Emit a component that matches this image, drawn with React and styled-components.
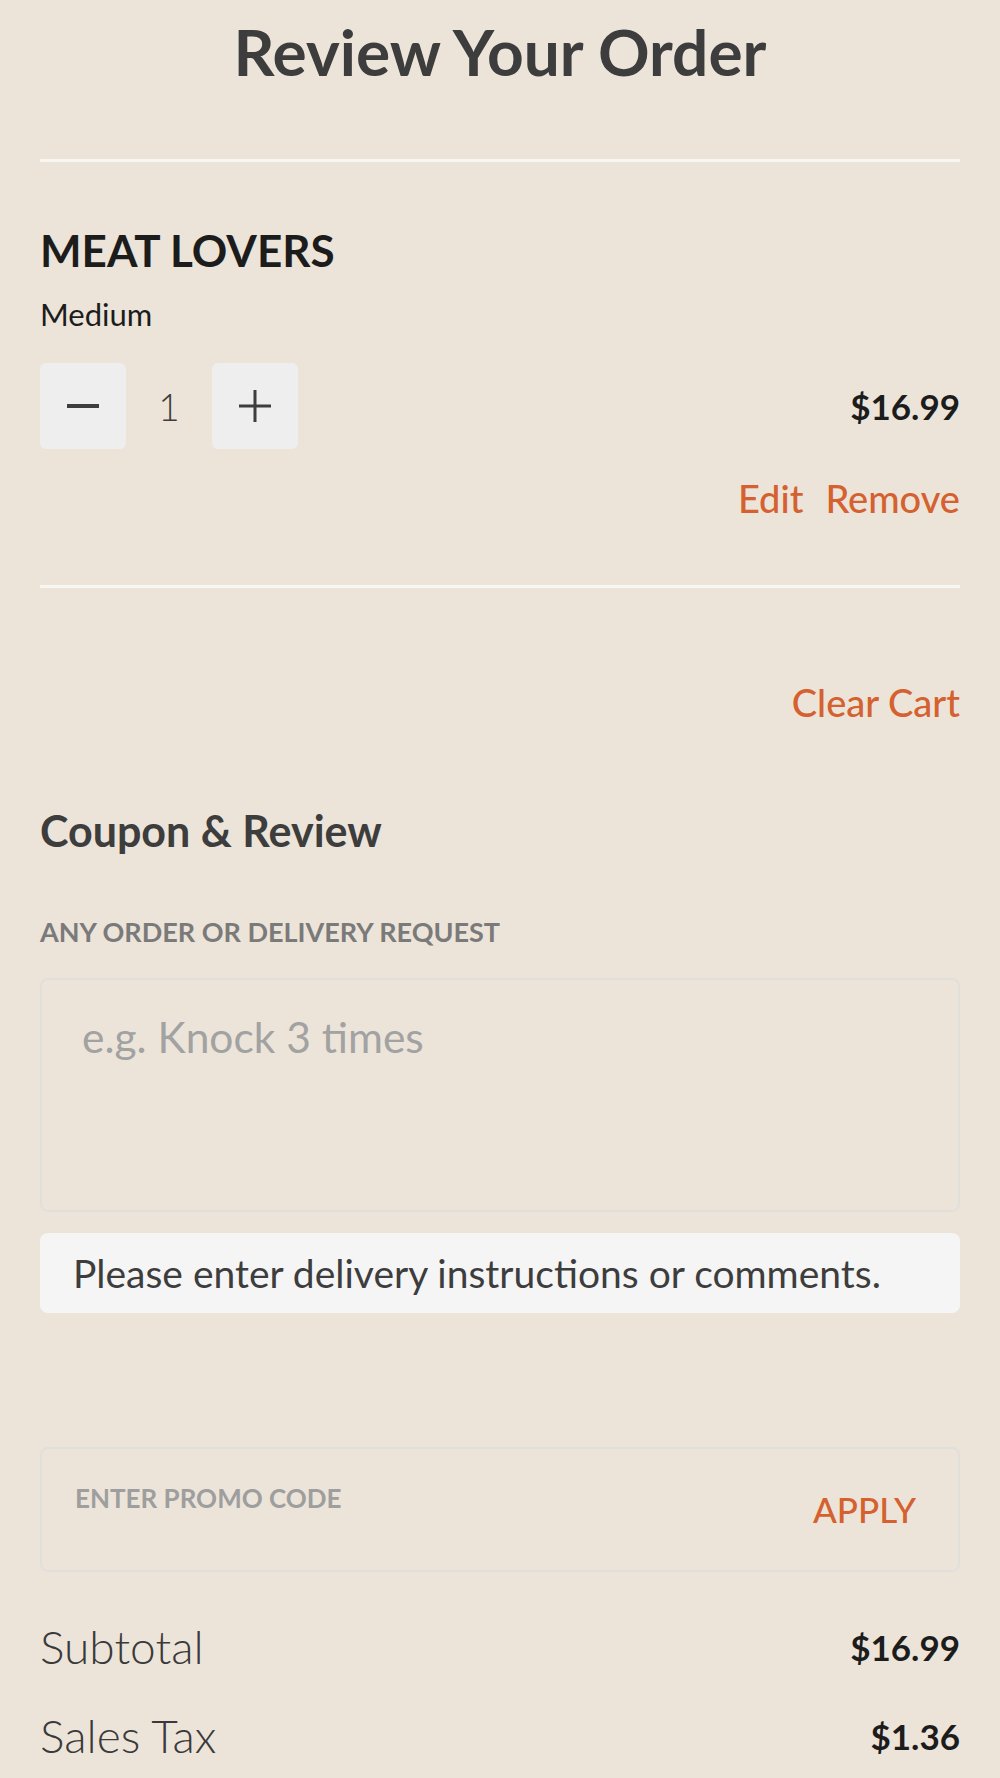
import React from 'react';
import styled, { createGlobalStyle } from 'styled-components';

const GlobalStyle = createGlobalStyle`
  html, body { margin: 0; padding: 0; background: #ece4d9; }
  body { font-family: Lato, "Open Sans", sans-serif; -webkit-font-smoothing: antialiased; }
  *, *::before, *::after { box-sizing: border-box; }
`;

const ORANGE = '#d4612f';

const Page = styled.main`
  padding: 13px 40px 0;
  min-height: 1778px;
`;

const Title = styled.h1`
  margin: 0;
  font-size: 64px;
  line-height: 77px;
  font-weight: 700;
  color: #3d3d3d;
  text-align: center;
`;

const Divider = styled.hr`
  margin: ${(p) => p.$top}px 0 0;
  border: 0;
  height: 3px;
  background: #f8f6f1;
`;

const Item = styled.section`
  margin-top: 61px;
  display: flex;
  flex-direction: column;
`;

const ItemName = styled.h2`
  margin: 0;
  font-size: 44px;
  line-height: 55px;
  font-weight: 700;
  color: #1c1c1c;
`;

const ItemSize = styled.div`
  margin-top: 19px;
  font-size: 31px;
  line-height: 35px;
  color: #1c1c1c;
`;

const QtyRow = styled.div`
  margin-top: 31px;
  display: flex;
  align-items: center;
`;

const QtyButton = styled.button`
  width: 86px;
  height: 86px;
  border: 0;
  border-radius: 6px;
  background: #eeeeee;
  display: flex;
  align-items: center;
  justify-content: center;
  padding: 0;
  cursor: pointer;
`;

const QtyValue = styled.span`
  width: 86px;
  text-align: center;
  font-size: 37px;
  font-weight: 300;
  color: #3d3d3d;
`;

const Price = styled.span`
  margin-left: auto;
  font-size: 35px;
  font-weight: 700;
  color: #1c1c1c;
`;

const Actions = styled.div`
  margin-top: ${(p) => p.$top || 0}px;
  display: flex;
  justify-content: flex-end;
  gap: 22px;
`;

const LinkButton = styled.button`
  border: 0;
  background: none;
  padding: 0;
  font-family: inherit;
  font-size: ${(p) => p.$size || 38}px;
  line-height: 43px;
  font-weight: 500;
  color: ${ORANGE};
  cursor: pointer;
`;

const SectionTitle = styled.h3`
  margin: 82px 0 0;
  font-size: 43px;
  line-height: 50px;
  font-weight: 700;
  color: #3d3d3d;
`;

const FieldLabel = styled.label`
  display: block;
  margin-top: 59px;
  font-size: 27px;
  line-height: 34px;
  font-weight: 700;
  color: #7a7a7a;
`;

const Notes = styled.textarea`
  display: block;
  width: 100%;
  height: 234px;
  margin-top: 29px;
  padding: 34px 40px;
  border: 2px solid #e0dfdc;
  border-radius: 8px;
  background: transparent;
  resize: none;
  font-family: inherit;
  font-size: 42.5px;
  line-height: 46px;
  color: #3d3d3d;
  outline: none;
  &::placeholder { color: #a2a2a2; }
`;

const InfoBox = styled.div`
  margin-top: 21px;
  height: 80px;
  padding: 0 33px;
  display: flex;
  align-items: center;
  background: #f5f5f5;
  border-radius: 8px;
  font-size: 39px;
  line-height: 46px;
  color: #3d3d3d;
`;

const PromoBox = styled.div`
  margin-top: 134px;
  height: 125px;
  padding: 0 42px 0 33px;
  border: 2px solid #e0dfdc;
  border-radius: 8px;
  display: flex;
  align-items: center;
`;

const PromoInput = styled.input`
  flex: 1;
  align-self: flex-start;
  margin-top: 32px;
  height: 34px;
  padding: 0;
  border: 0;
  background: transparent;
  outline: none;
  font-family: inherit;
  font-size: 26px;
  font-weight: 700;
  color: #3d3d3d;
  &::placeholder { color: #9e9e9e; }
`;

const SummaryRow = styled.div`
  margin-top: ${(p) => p.$top}px;
  display: flex;
  align-items: center;
`;

const SummaryLabel = styled.span`
  font-size: 46px;
  line-height: 50px;
  font-weight: 300;
  color: #3a3a3a;
`;

const Icon = ({ plus }) => (
  <svg width="34" height="34" viewBox="0 0 34 34" aria-hidden="true">
    <line x1="1" y1="17" x2="33" y2="17" stroke="#3d3d3d" strokeWidth={plus ? 3 : 4} />
    {plus && <line x1="17" y1="1" x2="17" y2="33" stroke="#3d3d3d" strokeWidth="3" />}
  </svg>
);

export default function App() {
  return (
    <>
      <GlobalStyle />
      <Page>
        <Title>Review Your Order</Title>
        <Divider $top={69} />

        <Item>
          <ItemName>MEAT LOVERS</ItemName>
          <ItemSize>Medium</ItemSize>
          <QtyRow>
            <QtyButton aria-label="Decrease"><Icon /></QtyButton>
            <QtyValue>1</QtyValue>
            <QtyButton aria-label="Increase"><Icon plus /></QtyButton>
            <Price>$16.99</Price>
          </QtyRow>
          <Actions $top={28}>
            <LinkButton>Edit</LinkButton>
            <LinkButton>Remove</LinkButton>
          </Actions>
        </Item>

        <Divider $top={65} />

        <Actions $top={93}>
          <LinkButton>Clear Cart</LinkButton>
        </Actions>

        <SectionTitle>Coupon &amp; Review</SectionTitle>
        <FieldLabel htmlFor="notes">ANY ORDER OR DELIVERY REQUEST</FieldLabel>
        <Notes id="notes" placeholder="e.g. Knock 3 times" />
        <InfoBox>Please enter delivery instructions or comments.</InfoBox>

        <PromoBox>
          <PromoInput placeholder="ENTER PROMO CODE" />
          <LinkButton $size={35}>APPLY</LinkButton>
        </PromoBox>

        <SummaryRow $top={50}>
          <SummaryLabel>Subtotal</SummaryLabel>
          <Price>$16.99</Price>
        </SummaryRow>
        <SummaryRow $top={39}>
          <SummaryLabel>Sales Tax</SummaryLabel>
          <Price>$1.36</Price>
        </SummaryRow>
      </Page>
    </>
  );
}
